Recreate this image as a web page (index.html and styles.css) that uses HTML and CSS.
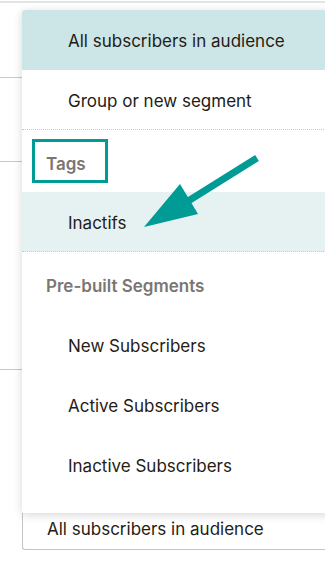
FILE: index.html
```html
<!DOCTYPE html>
<html>
<head>
<meta charset="utf-8">
<link rel="stylesheet" href="styles.css">
</head>
<body>
<div class="page">
  <div class="bg-row r1"></div>
  <div class="bg-row r2"></div>
  <div class="bg-row r3"></div>
  <div class="bg-row r4"></div>
  <div class="select">All subscribers in audience</div>

  <div class="menu">
    <div class="item selected">All subscribers in audience</div>
    <div class="item sep">Group or new segment</div>
    <div class="header">Tags</div>
    <div class="item hover sep">Inactifs</div>
    <div class="header tall">Pre-built Segments</div>
    <div class="item">New Subscribers</div>
    <div class="item">Active Subscribers</div>
    <div class="item">Inactive Subscribers</div>
  </div>

  <div class="tag-box"></div>
  <svg class="arrow" width="325" height="561" viewBox="0 0 325 561">
    <line x1="257" y1="158" x2="185" y2="203" stroke="#009b95" stroke-width="7"/>
    <polygon points="144,227 180,184 198,214" fill="#009b95"/>
  </svg>
</div>
</body>
</html>
```
FILE: styles.css
```css
html, body {
  margin: 0;
  padding: 0;
  background: #ffffff;
  overflow: hidden;
}
.page {
  position: relative;
  width: 325px;
  height: 561px;
  font-family: Inter, "Liberation Sans", Arial, sans-serif;
  color: #241c15;
  display: flex;
  flex-direction: column;
}
.bg-row {
  flex: none;
  border-bottom: 1px solid #c9c9c9;
}
.r1 { height: 1px; border-bottom: 2px solid #e4e4e4; }
.r2 { height: 74px; }
.r3 { height: 83px; }
.r4 { height: 207px; }
.select {
  margin: 143px 0 0 22px;
  height: 37px;
  border: 1px solid #c4c4c4;
  border-top: none;
  border-right: none;
  border-radius: 0 0 0 3px;
  padding: 1px 0 0 24px;
  font-size: 17px;
  line-height: 30px;
  box-sizing: border-box;
}
.menu {
  position: absolute;
  left: 22px;
  top: 10px;
  width: 310px;
  height: 503px;
  background: #ffffff;
  border-radius: 3px 0 0 3px;
  box-shadow: 0 2px 10px rgba(0, 0, 0, 0.16);
  display: flex;
  flex-direction: column;
  font-size: 17px;
}
.item {
  height: 60px;
  line-height: 56px;
  padding: 3px 0 0 46px;
  flex: none;
  box-sizing: border-box;
}
.item.selected {
  background: #cce5e6;
  border-radius: 3px 0 0 0;
}
.item.sep {
  border-bottom: 1px dotted #c8c8c8;
}
.item.hover {
  background: #e6f1f2;
}
.header {
  height: 62px;
  line-height: 62px;
  padding: 3px 0 0 24px;
  box-sizing: border-box;
  font-weight: 600;
  color: #7a7673;
  flex: none;
}
.header.tall {
  height: 63px;
}
.tag-box {
  position: absolute;
  left: 32px;
  top: 139px;
  width: 76px;
  height: 44px;
  border: 3px solid #009b95;
  box-sizing: border-box;
}
.arrow {
  position: absolute;
  left: 0;
  top: 0;
}
```
